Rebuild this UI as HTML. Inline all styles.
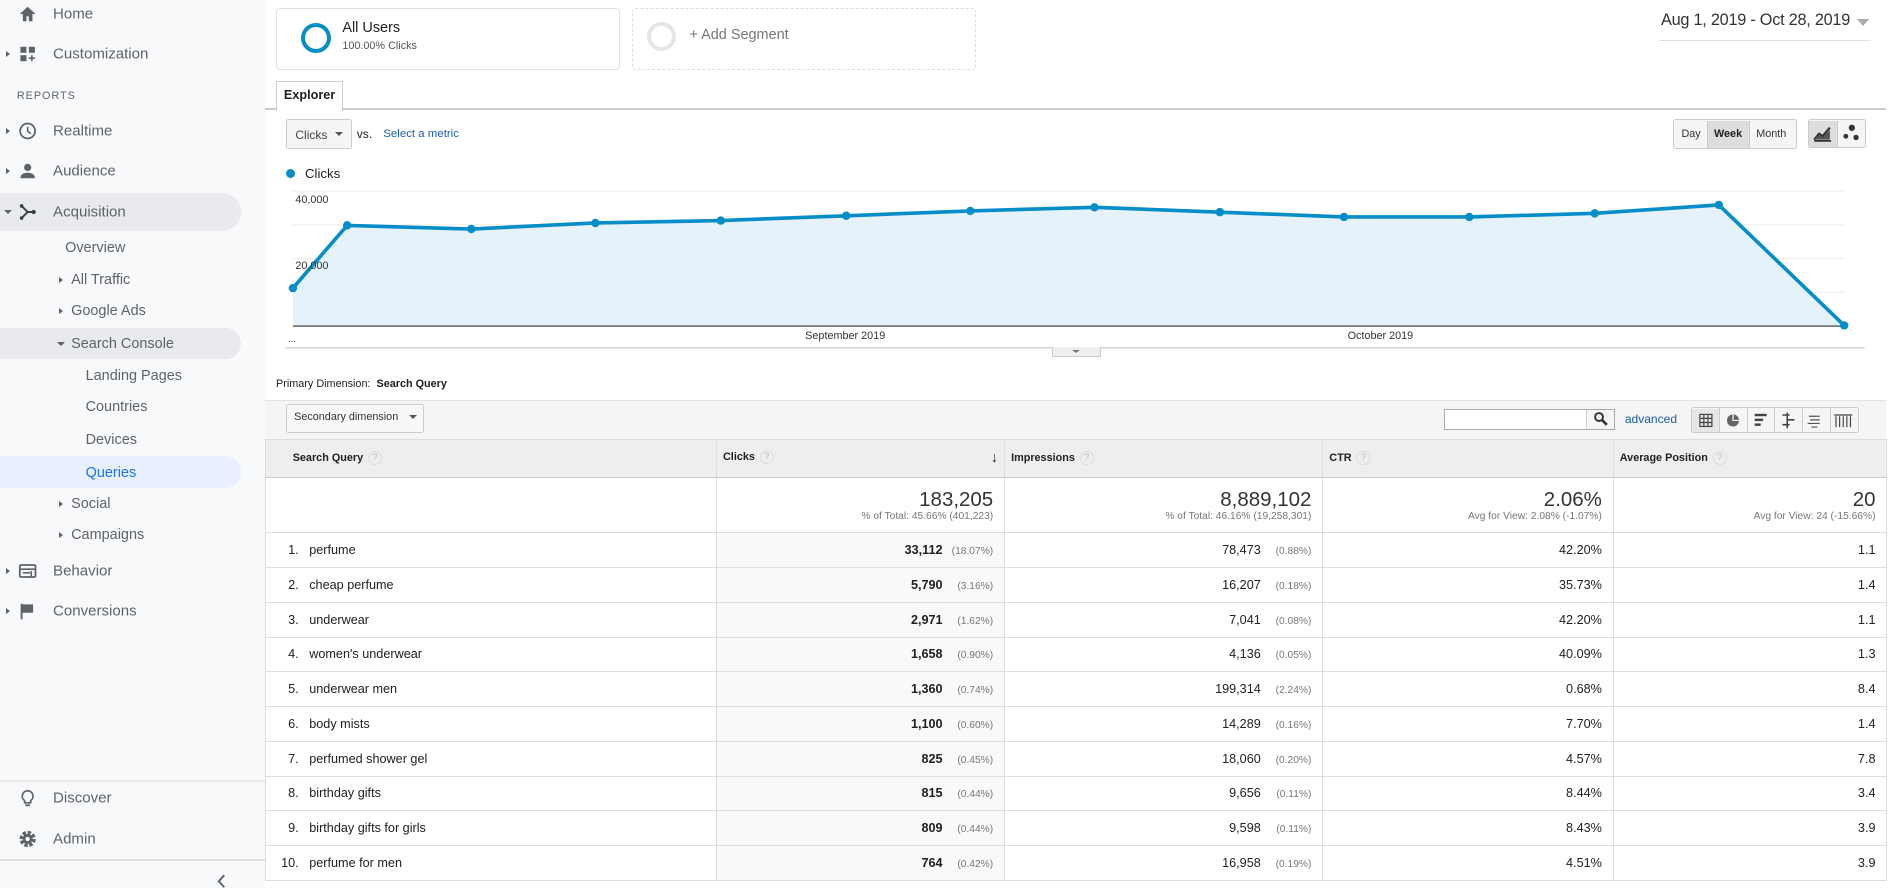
<!DOCTYPE html>
<html><head><meta charset="utf-8"><style>
html,body{margin:0;padding:0;width:1890px;height:888px;overflow:hidden;background:#fff}
#w{zoom:1.20536;width:1568px;height:737px;position:relative;font-family:"Liberation Sans",sans-serif;color:#212121;font-size:11px}
.a{position:absolute;white-space:nowrap}
#sb{position:absolute;left:0;top:0;width:220px;height:737px;background:#f8f9fb}
.ni{position:absolute;left:44px;font-size:12.5px;color:#5f6368;transform:translateY(-50%)}
.ic{position:absolute;left:15px;width:16px;height:16px;transform:translateY(-50%)}
.tri{position:absolute;width:0;height:0;border-top:3px solid transparent;border-bottom:3px solid transparent;border-left:4px solid #5f6368;transform:translateY(-50%)}
.trd{position:absolute;width:0;height:0;border-left:3.5px solid transparent;border-right:3.5px solid transparent;border-top:4px solid #5f6368;transform:translateY(-50%)}
.hl{position:absolute;left:0;width:200px;border-radius:0 16px 16px 0;background:#e8eaed}
.btn{position:absolute;border:1px solid #ccc;border-radius:2px;background:#f5f5f5;box-sizing:border-box}
table{border-collapse:collapse;position:absolute;left:220px;top:364px;width:1345px;table-layout:fixed}
td{border:1px solid #ddd;font-size:10.5px;height:28px;padding:0 9px;white-space:nowrap}
th{background:#eeeeee;border:1px solid #ddd;border-bottom:1px solid #ccc;height:31px;font-size:9px;text-align:left;padding:0 5px;font-weight:bold;color:#222}
.q{display:inline-block;width:10px;height:10px;border:1px solid #ddd;border-radius:50%;color:#bbb;font-size:8px;text-align:center;line-height:10px;font-weight:normal;margin-left:4px;vertical-align:middle}
.r{text-align:right}
.cl{background:#f9f9f9}
.p{color:#777;font-size:8.5px;display:inline-block;width:42px;text-align:right}
.tot td{height:45px;vertical-align:middle}
.big{font-size:17px;color:#333;line-height:18px}
.sm{font-size:8.5px;color:#777}
.n{display:inline-block;width:26px;text-align:right;margin-left:-8px}
</style></head><body><div id="w">
<div id="sb">
<svg class="ic" style="top:12px" viewBox="0 0 16 16"><path d="M8 2 1.5 8H4v6h3v-4h2v4h3V8h2.5z" fill="#5f6368"/></svg><div class="ni" style="top:12px">Home</div>
<div class="tri" style="left:5px;top:45px"></div><svg class="ic" style="top:45px" viewBox="0 0 16 16"><rect x="2" y="2" width="5" height="5" fill="#5f6368"/><rect x="9" y="2" width="5" height="5" fill="#5f6368"/><rect x="2" y="9" width="5" height="5" fill="#5f6368"/><path d="M11.5 9v5M9 11.5h5" stroke="#5f6368" stroke-width="1.3"/></svg><div class="ni" style="top:45px">Customization</div>
<div class="a" style="left:14px;top:75px;font-size:9px;color:#5f6368;letter-spacing:.8px">REPORTS</div>
<div class="tri" style="left:5px;top:109px"></div><svg class="ic" style="top:109px" viewBox="0 0 16 16"><circle cx="8" cy="8" r="6.2" fill="none" stroke="#5f6368" stroke-width="1.5"/><path d="M8 4.5V8l2.5 2.3" fill="none" stroke="#5f6368" stroke-width="1.3"/></svg><div class="ni" style="top:109px">Realtime</div>
<div class="tri" style="left:5px;top:142px"></div><svg class="ic" style="top:142px" viewBox="0 0 16 16"><circle cx="8" cy="5" r="3" fill="#5f6368"/><path d="M2 14c0-3.5 3-4.5 6-4.5s6 1 6 4.5z" fill="#5f6368"/></svg><div class="ni" style="top:142px">Audience</div>
<div class="hl" style="top:160px;height:32px"></div>
<div class="trd" style="left:3px;top:176px"></div><svg class="ic" style="top:176px" viewBox="0 0 16 16"><path d="M3 3l5 5-5 5M8 8h4" fill="none" stroke="#3c4043" stroke-width="1.6"/><circle cx="13" cy="8" r="1.8" fill="#3c4043"/><circle cx="3" cy="3" r="1.5" fill="#3c4043"/><circle cx="3" cy="13" r="1.5" fill="#3c4043"/></svg><div class="ni" style="top:176px">Acquisition</div>
<div class="ni" style="left:54px;top:206px;font-size:12px">Overview</div>
<div class="tri" style="left:49px;top:232px"></div><div class="ni" style="left:59px;top:232px;font-size:12px">All Traffic</div>
<div class="tri" style="left:49px;top:258px"></div><div class="ni" style="left:59px;top:258px;font-size:12px">Google Ads</div>
<div class="hl" style="top:272px;height:26px"></div>
<div class="trd" style="left:47px;top:285px"></div><div class="ni" style="left:59px;top:285px;font-size:12px">Search Console</div>
<div class="ni" style="left:71px;top:312px;font-size:12px">Landing Pages</div>
<div class="ni" style="left:71px;top:338px;font-size:12px">Countries</div>
<div class="ni" style="left:71px;top:365px;font-size:12px">Devices</div>
<div class="hl" style="top:378px;height:27px;background:#e8f0fe"></div>
<div class="ni" style="left:71px;top:392px;font-size:12px;color:#1a73e8">Queries</div>
<div class="tri" style="left:49px;top:418px"></div><div class="ni" style="left:59px;top:418px;font-size:12px">Social</div>
<div class="tri" style="left:49px;top:444px"></div><div class="ni" style="left:59px;top:444px;font-size:12px">Campaigns</div>
<div class="tri" style="left:5px;top:474px"></div><svg class="ic" style="top:474px" viewBox="0 0 16 16"><rect x="1.5" y="3" width="13" height="10" rx="1" fill="none" stroke="#5f6368" stroke-width="1.5"/><path d="M1.5 6.5h13M4 9.5h6M11 8v5" stroke="#5f6368" stroke-width="1.3"/></svg><div class="ni" style="top:474px">Behavior</div>
<div class="tri" style="left:5px;top:507px"></div><svg class="ic" style="top:507px" viewBox="0 0 16 16"><path d="M3 2v13" stroke="#5f6368" stroke-width="1.6"/><path d="M3.5 2.5h9v7h-9z" fill="#5f6368"/></svg><div class="ni" style="top:507px">Conversions</div>
<div class="a" style="left:0;top:647px;width:220px;height:2px;background:#e8e8e8"></div>
<svg class="ic" style="top:662px" viewBox="0 0 16 16"><path d="M8 2a4.5 4.5 0 0 0-2.5 8.2V12h5v-1.8A4.5 4.5 0 0 0 8 2z" fill="none" stroke="#5f6368" stroke-width="1.4"/><path d="M6 14h4" stroke="#5f6368" stroke-width="1.4"/></svg><div class="ni" style="top:662px">Discover</div>
<svg class="ic" style="top:696px" viewBox="0 0 16 16"><circle cx="8" cy="8" r="5" fill="none" stroke="#5f6368" stroke-width="3.5" stroke-dasharray="2.6 1.3"/><circle cx="8" cy="8" r="4.2" fill="#5f6368"/><circle cx="8" cy="8" r="1.8" fill="#f8f9fb"/></svg><div class="ni" style="top:696px">Admin</div>
<div class="a" style="left:0;top:713px;width:220px;height:1px;background:#e0e0e0"></div>
<svg class="a" style="left:180px;top:725px" width="8" height="12" viewBox="0 0 8 12"><path d="M6 1 1.5 6 6 11" fill="none" stroke="#5f6368" stroke-width="1.6"/></svg>
</div>
<!-- segments -->
<div class="a" style="left:229px;top:7px;width:284px;height:49px;border:1px solid #e0e0e0;border-radius:3px"></div>
<div class="a" style="left:250px;top:19px;width:25px;height:25px;border:3.5px solid #058dc7;border-radius:50%;box-sizing:border-box"></div>
<div class="a" style="left:284px;top:17px;font-size:12px">All Users</div>
<div class="a" style="left:284px;top:33px;font-size:9px;color:#555">100.00% Clicks</div>
<div class="a" style="left:524px;top:7px;width:284px;height:49px;border:1px dashed #ddd;border-radius:3px"></div>
<div class="a" style="left:537px;top:18px;width:24px;height:24px;border:3.5px solid #e6e6e6;border-radius:50%;box-sizing:border-box"></div>
<div class="a" style="left:572px;top:22px;font-size:12px;color:#777">+ Add Segment</div>
<div class="a" style="left:1378px;top:9px;font-size:13.5px;color:#333;letter-spacing:-0.2px">Aug 1, 2019 - Oct 28, 2019</div>
<div class="a" style="left:1541px;top:16px;border-left:5px solid transparent;border-right:5px solid transparent;border-top:6px solid #aaa"></div>
<div class="a" style="left:1376px;top:33px;width:176px;height:1px;background:#e0e0e0"></div>
<!-- explorer -->
<div class="a" style="left:220px;top:90px;width:1345px;height:1px;background:#ccc"></div>
<div class="a" style="left:229px;top:67px;width:54px;height:24px;border:1px solid #ccc;border-bottom:none;background:#fff;font-weight:bold;font-size:10.5px;text-align:center;line-height:23px">Explorer</div>
<div class="btn" style="left:237px;top:99px;width:55px;height:25px"></div>
<div class="a" style="left:245px;top:106px;font-size:10px;color:#444">Clicks</div>
<div class="trd" style="left:278px;top:111px;border-top-color:#555"></div>
<div class="a" style="left:296px;top:105px;font-size:10px">vs.</div>
<div class="a" style="left:318px;top:106px;font-size:9.5px;color:#1a5fa6">Select a metric</div>
<div class="btn" style="left:1388px;top:99px;width:103px;height:25px"></div>
<div class="a" style="left:1416px;top:100px;width:34px;height:23px;background:#ddd;border-left:1px solid #ccc;border-right:1px solid #ccc"></div>
<div class="a" style="left:1395px;top:106px;font-size:9px;color:#333">Day</div>
<div class="a" style="left:1422px;top:106px;font-size:9px;font-weight:bold;color:#222">Week</div>
<div class="a" style="left:1457px;top:106px;font-size:9px;color:#333">Month</div>
<div class="btn" style="left:1500px;top:99px;width:48px;height:24px"></div>
<div class="a" style="left:1501px;top:100px;width:23px;height:22px;background:#ddd;border-right:1px solid #ccc"></div>
<svg class="a" style="left:1504px;top:103px" width="16" height="15" viewBox="0 0 16 15"><path d="M1 13 5 8l3 2 6-7" fill="none" stroke="#333" stroke-width="1.8"/><path d="M1 14h14" stroke="#333" stroke-width="1.5"/><path d="M1 13l4-4 3 2 6-6v8z" fill="#555"/></svg>
<svg class="a" style="left:1527px;top:102px" width="16" height="16" viewBox="0 0 16 16"><circle cx="9" cy="4" r="2.6" fill="#333"/><circle cx="4" cy="11" r="2" fill="#333"/><circle cx="12.5" cy="12" r="2.2" fill="#333"/></svg>
<div class="a" style="left:237px;top:140px;width:8px;height:8px;border-radius:50%;background:#058dc7"></div>
<div class="a" style="left:253px;top:138px;font-size:11px">Clicks</div>
<svg class="a" style="left:0;top:0" width="1568" height="300">
<g stroke="#eee" stroke-width="1"><path d="M243 158.5H1530M243 186.5H1530M243 214.5H1530M243 242.5H1530"/></g>
<path d="M243 239 288 187 391 190 494 185 598 183 702 179 805 175 908 172 1012 176 1115 180 1219 180 1323 177 1426 170 1530 270 V270H243Z" fill="#e5f2fa"/>
<path d="M243 270.5H1530" stroke="#333" stroke-width="1"/>
<path d="M243 239 288 187 391 190 494 185 598 183 702 179 805 175 908 172 1012 176 1115 180 1219 180 1323 177 1426 170 1530 270" fill="none" stroke="#058dc7" stroke-width="3"/>
<g fill="#058dc7"><circle cx="243" cy="239" r="3.5"/><circle cx="288" cy="187" r="3.5"/><circle cx="391" cy="190" r="3.5"/><circle cx="494" cy="185" r="3.5"/><circle cx="598" cy="183" r="3.5"/><circle cx="702" cy="179" r="3.5"/><circle cx="805" cy="175" r="3.5"/><circle cx="908" cy="172" r="3.5"/><circle cx="1012" cy="176" r="3.5"/><circle cx="1115" cy="180" r="3.5"/><circle cx="1219" cy="180" r="3.5"/><circle cx="1323" cy="177" r="3.5"/><circle cx="1426" cy="170" r="3.5"/><circle cx="1530" cy="270" r="3.5"/></g>
<path d="M237 288.5H1547" stroke="#ccc"/>
</svg>
<div class="a" style="left:245px;top:161px;font-size:9px;color:#333">40,000</div>
<div class="a" style="left:245px;top:216px;font-size:9px;color:#333">20,000</div>
<div class="a" style="left:239px;top:277px;font-size:8px;color:#333">...</div>
<div class="a" style="left:668px;top:274px;font-size:9px;color:#333">September 2019</div>
<div class="a" style="left:1118px;top:274px;font-size:9px;color:#333">October 2019</div>
<div class="a" style="left:873px;top:288px;width:39px;height:7px;background:#eee;border:1px solid #ccc;border-top:none"></div>
<div class="a" style="left:889px;top:290px;border-left:4px solid transparent;border-right:4px solid transparent;border-top:3px solid #777"></div>
<div class="a" style="left:229px;top:314px;font-size:9px">Primary Dimension: &nbsp;<b>Search Query</b></div>
<div class="a" style="left:220px;top:332px;width:1345px;height:31px;background:#f5f5f5;border-top:1px solid #e3e3e3"></div>
<div class="btn" style="left:237px;top:335px;width:115px;height:24px;background:#f8f8f8"></div>
<div class="a" style="left:244px;top:341px;font-size:9px;color:#333">Secondary dimension</div>
<div class="trd" style="left:339px;top:346px;border-top-color:#555"></div>
<div class="a" style="left:1198px;top:339px;width:141px;height:18px;border:1px solid #aaa;background:#fff;box-sizing:border-box"></div>
<div class="a" style="left:1316px;top:339px;width:24px;height:18px;border:1px solid #aaa;border-left:1px solid #ccc;background:#f5f5f5;box-sizing:border-box"></div>
<svg class="a" style="left:1322px;top:341px" width="13" height="13" viewBox="0 0 13 13"><circle cx="5" cy="5" r="3.3" fill="none" stroke="#333" stroke-width="1.6"/><path d="M7.5 7.5 11.5 11.5" stroke="#333" stroke-width="2.2"/></svg>
<div class="a" style="left:1348px;top:342px;font-size:10px;color:#1a5fa6">advanced</div>
<div class="btn" style="left:1403px;top:338px;width:139px;height:21px"></div>
<div class="a" style="left:1404px;top:339px;width:22px;height:19px;background:#e6e6e6"></div>
<div class="a" style="left:1426px;top:338px;width:1px;height:21px;background:#ccc"></div><div class="a" style="left:1449px;top:338px;width:1px;height:21px;background:#ccc"></div><div class="a" style="left:1472px;top:338px;width:1px;height:21px;background:#ccc"></div><div class="a" style="left:1495px;top:338px;width:1px;height:21px;background:#ccc"></div><div class="a" style="left:1518px;top:338px;width:1px;height:21px;background:#ccc"></div>
<svg class="a" style="left:1404px;top:339px" width="138" height="19" viewBox="0 0 138 19"><g fill="none" stroke="#444" stroke-width="1"><rect x="6.5" y="4.5" width="10" height="10"/><path d="M9.8 4.5v10M13.2 4.5v10M6.5 7.8h10M6.5 11.2h10"/></g><circle cx="34" cy="9.5" r="5" fill="#666"/><path d="M34 4.5v5h5" stroke="#f5f5f5" stroke-width="1" fill="none"/><g fill="#444"><rect x="52" y="4" width="10" height="2"/><rect x="52" y="8" width="7" height="2"/><rect x="52" y="12" width="5" height="2"/></g><g stroke="#444" stroke-width="1.3" fill="none"><path d="M75 5h6M79 9h6M75 13h6M79 3v13"/></g><g stroke="#555" stroke-width="1" fill="none"><path d="M97 6h9M98 9h8M96 12h10M99 15h5"/></g><g stroke="#444" stroke-width="1"><path d="M119.5 6v9M122.5 6v9M125.5 6v9M128.5 6v9M131.5 6v9M118 5h15"/></g></svg>
<table>
<colgroup><col style="width:374px"><col style="width:239px"><col style="width:264px"><col style="width:241px"><col style="width:227px"></colgroup>
<tr><th style="padding-left:22px">Search Query<span class="q">?</span></th><th>Clicks<span class="q">?</span><span style="float:right;font-size:12px;font-weight:normal">&#8595;</span></th><th>Impressions<span class="q">?</span></th><th>CTR<span class="q">?</span></th><th>Average Position<span class="q">?</span></th></tr>
<tr class="tot"><td></td><td class="r"><div class="big">183,205</div><div class="sm">% of Total: 45.66% (401,223)</div></td><td class="r"><div class="big">8,889,102</div><div class="sm">% of Total: 46.16% (19,258,301)</div></td><td class="r"><div class="big">2.06%</div><div class="sm">Avg for View: 2.08% (-1.07%)</div></td><td class="r"><div class="big">20</div><div class="sm">Avg for View: 24 (-15.66%)</div></td></tr>
<tr><td><span class="n">1.</span>&nbsp;&nbsp;&nbsp;perfume</td><td class="r cl"><b>33,112</b><span class="p">(18.07%)</span></td><td class="r">78,473<span class="p">(0.88%)</span></td><td class="r">42.20%</td><td class="r">1.1</td></tr>
<tr><td><span class="n">2.</span>&nbsp;&nbsp;&nbsp;cheap perfume</td><td class="r cl"><b>5,790</b><span class="p">(3.16%)</span></td><td class="r">16,207<span class="p">(0.18%)</span></td><td class="r">35.73%</td><td class="r">1.4</td></tr>
<tr><td><span class="n">3.</span>&nbsp;&nbsp;&nbsp;underwear</td><td class="r cl"><b>2,971</b><span class="p">(1.62%)</span></td><td class="r">7,041<span class="p">(0.08%)</span></td><td class="r">42.20%</td><td class="r">1.1</td></tr>
<tr><td><span class="n">4.</span>&nbsp;&nbsp;&nbsp;women's underwear</td><td class="r cl"><b>1,658</b><span class="p">(0.90%)</span></td><td class="r">4,136<span class="p">(0.05%)</span></td><td class="r">40.09%</td><td class="r">1.3</td></tr>
<tr><td><span class="n">5.</span>&nbsp;&nbsp;&nbsp;underwear men</td><td class="r cl"><b>1,360</b><span class="p">(0.74%)</span></td><td class="r">199,314<span class="p">(2.24%)</span></td><td class="r">0.68%</td><td class="r">8.4</td></tr>
<tr><td><span class="n">6.</span>&nbsp;&nbsp;&nbsp;body mists</td><td class="r cl"><b>1,100</b><span class="p">(0.60%)</span></td><td class="r">14,289<span class="p">(0.16%)</span></td><td class="r">7.70%</td><td class="r">1.4</td></tr>
<tr><td><span class="n">7.</span>&nbsp;&nbsp;&nbsp;perfumed shower gel</td><td class="r cl"><b>825</b><span class="p">(0.45%)</span></td><td class="r">18,060<span class="p">(0.20%)</span></td><td class="r">4.57%</td><td class="r">7.8</td></tr>
<tr><td><span class="n">8.</span>&nbsp;&nbsp;&nbsp;birthday gifts</td><td class="r cl"><b>815</b><span class="p">(0.44%)</span></td><td class="r">9,656<span class="p">(0.11%)</span></td><td class="r">8.44%</td><td class="r">3.4</td></tr>
<tr><td><span class="n">9.</span>&nbsp;&nbsp;&nbsp;birthday gifts for girls</td><td class="r cl"><b>809</b><span class="p">(0.44%)</span></td><td class="r">9,598<span class="p">(0.11%)</span></td><td class="r">8.43%</td><td class="r">3.9</td></tr>
<tr><td><span class="n">10.</span>&nbsp;&nbsp;&nbsp;perfume for men</td><td class="r cl"><b>764</b><span class="p">(0.42%)</span></td><td class="r">16,958<span class="p">(0.19%)</span></td><td class="r">4.51%</td><td class="r">3.9</td></tr>
</table>
</div></body></html>
